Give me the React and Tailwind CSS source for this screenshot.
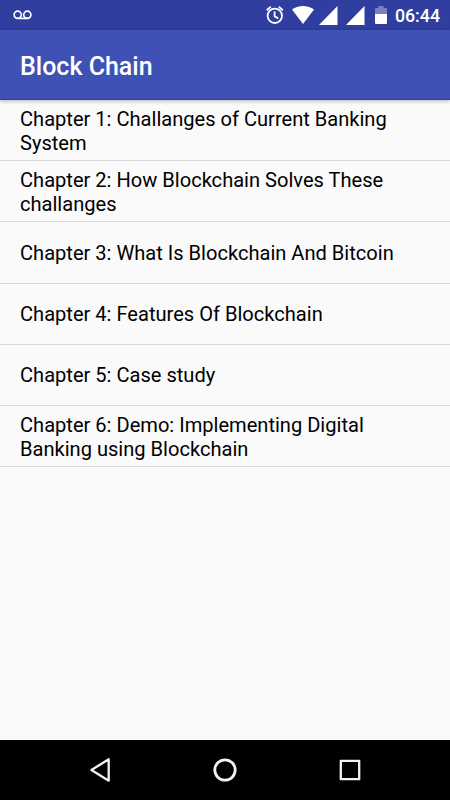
import React from 'react';

const chapters = [
  'Chapter 1: Challanges of Current Banking System',
  'Chapter 2: How Blockchain Solves These challanges',
  'Chapter 3: What Is Blockchain And Bitcoin',
  'Chapter 4: Features Of Blockchain',
  'Chapter 5: Case study',
  'Chapter 6: Demo: Implementing Digital Banking using Blockchain',
];

function StatusBar() {
  return (
    <div className="flex h-[30px] items-center justify-between bg-[#303f9f] pl-[13px] pr-[10px] text-white">
      <svg className="h-[10px] w-[19px]" viewBox="0 0 19 10" fill="none" stroke="currentColor" strokeWidth="1.7">
        <circle cx="4.7" cy="4.8" r="3.6" />
        <circle cx="14.3" cy="4.8" r="3.6" />
        <path d="M4.7 8.4h9.6" />
      </svg>
      <div className="flex h-full items-center">
        <svg className="h-5 w-5" viewBox="0 0 20 20" fill="none" stroke="currentColor" strokeWidth="1.8">
          <circle cx="9.8" cy="10.8" r="7.2" />
          <path d="M9.6 6.5v4.8l3.6 2.1M1.7 5.2l4.1-3.4M17.9 5.2l-4.1-3.4" />
        </svg>
        <svg className="ml-[7px] h-5 w-[22px]" viewBox="0 0 22 20" fill="currentColor">
          <path d="M0 4.6C6-.2 16-.2 22 4.6L11 19z" />
        </svg>
        <svg className="ml-[5px] h-5 w-[19px]" viewBox="0 0 19 20" fill="currentColor">
          <path d="M18.5 1v19H0z" />
        </svg>
        <svg className="ml-2 h-5 w-[19px]" viewBox="0 0 19 20" fill="currentColor">
          <path d="M18.5 1v19H0z" />
        </svg>
        <svg className="ml-[10px] h-5 w-3" viewBox="0 0 12 20" fill="currentColor">
          <path opacity=".35" d="M3.5 1h5v2H11q1 0 1 1v5H0V4q0-1 1-1h2.5z" />
          <path d="M0 9h12v9q0 1-1 1H1q-1 0-1-1z" />
        </svg>
        <span className="ml-2 pt-[2px] text-[17.8px] font-medium leading-[30px]">06:44</span>
      </div>
    </div>
  );
}

function NavigationBar() {
  return (
    <nav className="flex h-[60px] items-center justify-center gap-[95px] bg-black text-[#f2f2f2]">
      <svg className="h-[30px] w-[30px]" viewBox="0 0 30 30" fill="none" stroke="currentColor" strokeWidth="2.3" strokeLinejoin="round">
        <path d="M23.7 4.3v21.4L6.4 15z" />
      </svg>
      <svg className="h-[30px] w-[30px]" viewBox="0 0 30 30" fill="none" stroke="currentColor" strokeWidth="2.8">
        <circle cx="15" cy="15" r="10.2" />
      </svg>
      <svg className="h-[30px] w-[30px]" viewBox="0 0 30 30" fill="none" stroke="currentColor" strokeWidth="2.3" strokeLinejoin="round">
        <path d="M5.8 5.8h18.4v18.4H5.8z" />
      </svg>
    </nav>
  );
}

function App() {
  return (
    <div className="flex h-screen w-full flex-col bg-[#fafafa] font-['Roboto',sans-serif]">
      <StatusBar />
      <header className="z-10 flex h-[70px] items-center border-b border-[#2a42ad] bg-[#3f51b5] px-5 pt-[4px] shadow-[0_1px_4px_rgba(0,0,0,0.3)]">
        <h1 className="text-[25px] font-medium text-white">Block Chain</h1>
      </header>
      <ul className="flex-1">
        {chapters.map((chapter) => (
          <li key={chapter} className="flex h-[61.2px] items-center border-b border-[#d8d8d8] px-5 pt-[1px] text-[20.08px] leading-6 text-black">
            {chapter}
          </li>
        ))}
      </ul>
      <NavigationBar />
    </div>
  );
}

export default App;
